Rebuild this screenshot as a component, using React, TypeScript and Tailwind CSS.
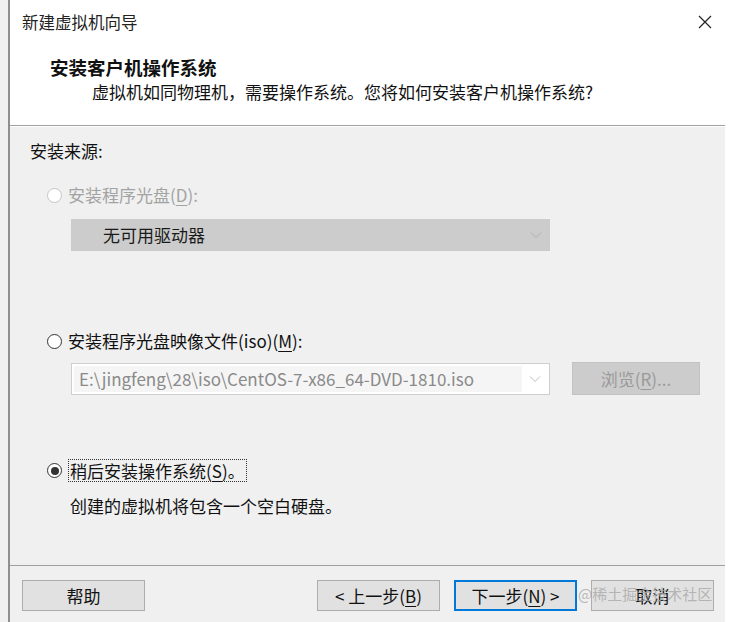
import React from 'react'

const font = "font-['Noto_Sans_CJK_SC','Noto_Sans',sans-serif]"

function Radio({ checked = false, disabled = false }: { checked?: boolean; disabled?: boolean }) {
  return (
    <span
      className={`flex items-center justify-center w-[15px] h-[15px] rounded-full bg-white border ${
        disabled ? 'border-[#c4c4c4]' : 'border-[#333333]'
      }`}
    >
      {checked && <span className="w-[8px] h-[8px] rounded-full bg-[#333333]" />}
    </span>
  )
}

function Chevron({ color }: { color: string }) {
  return (
    <svg width="12" height="8" viewBox="0 0 12 8">
      <polyline points="1,1.5 6,6.5 11,1.5" fill="none" stroke={color} strokeWidth="1" />
    </svg>
  )
}

function Key({ k }: { k: string }) {
  return <span className="underline underline-offset-[3px] decoration-1">{k}</span>
}

function Button({ children, focused = false }: { children: React.ReactNode; focused?: boolean }) {
  return (
    <div
      className={`w-[123px] h-[31px] flex items-center justify-center bg-[#e1e1e1] text-[17px] text-[#111] ${
        focused ? 'border-2 border-[#0078d7]' : 'border border-[#adadad]'
      }`}
    >
      {children}
    </div>
  )
}

export default function App() {
  return (
    <div className={`w-[734px] h-[622px] flex bg-white overflow-hidden ${font}`}>
      <div className="w-[8px] bg-[#f0f0f0]" />
      <div className="w-[2px] bg-[#8f8f8f]" />

      <div className="w-[715px] flex flex-col relative">
        {/* header */}
        <div className="h-[115px] bg-white flex flex-col">
          <div className="flex items-center justify-between pl-[12px] pr-[13px] pt-[10px] h-[34px]">
            <span className="text-[16.5px] leading-6 text-[#222]">新建虚拟机向导</span>
            <svg width="14" height="14" viewBox="0 0 14 14">
              <path d="M1 1 L13 13 M13 1 L1 13" stroke="#222" strokeWidth="1.2" />
            </svg>
          </div>
          <div className="pl-[40px] mt-[21px] text-[18.5px] leading-6 font-bold text-[#111]">安装客户机操作系统</div>
          <div className="pl-[82px] mt-[1px] text-[17px] leading-6 text-[#111]">
            虚拟机如同物理机，需要操作系统。您将如何安装客户机操作系统?
          </div>
        </div>
        <div className="h-[10px] bg-white" />
        <div className="h-[1px] bg-[#a0a0a0]" />
        <div className="h-[1px] bg-[#ffffff]" />

        {/* body */}
        <div className="flex-1 bg-[#f0f0f0] flex flex-col pl-[20px] pt-[12px] text-[17px] leading-6 text-[#111]">
          <div>安装来源:</div>

          <div className="mt-[20px] ml-[17px] flex items-center gap-[6px] text-[#a3a3a3]">
            <Radio disabled />
            <span>
              安装程序光盘(<Key k="D" />):
            </span>
          </div>
          <div className="mt-[12px] ml-[41px] w-[479px] h-[32px] bg-[#cccccc] flex items-center justify-between pl-[32px] pr-[8px]">
            <span className="text-[#1a1a1a]">无可用驱动器</span>
            <Chevron color="#b0b0b0" />
          </div>

          <div className="mt-[78px] ml-[17px] flex items-center gap-[6px]">
            <Radio />
            <span>
              安装程序光盘映像文件(iso)(<Key k="M" />):
            </span>
          </div>
          <div className="mt-[9px] ml-[41px] flex items-center gap-[22px]">
            <div className="w-[479px] h-[32px] bg-white border border-[#cfcfcf] flex items-center pl-[2px] pr-[8px]">
              <div className="w-[448px] h-[26px] bg-[#f5f5f5] flex items-center pl-[5px] text-[#8a8a8a] text-[17px] whitespace-nowrap overflow-hidden">
                E:\jingfeng\28\iso\CentOS-7-x86_64-DVD-1810.iso
              </div>
              <div className="flex-1 flex justify-end">
                <Chevron color="#bdbdbd" />
              </div>
            </div>
            <div className="w-[128px] h-[33px] bg-[#cccccc] border border-[#c2c2c2] flex items-center justify-center text-[#9a9a9a]">
              浏览(<Key k="R" />)...
            </div>
          </div>

          <div className="mt-[64px] ml-[17px] flex items-center gap-[6px]">
            <Radio checked />
            <span className="border border-dotted border-[#333] px-[1px] leading-[21px]">
              稍后安装操作系统(<Key k="S" />)。
            </span>
          </div>
          <div className="mt-[12px] ml-[40px]">创建的虚拟机将包含一个空白硬盘。</div>
        </div>

        {/* footer */}
        <div className="h-[1px] bg-[#a0a0a0]" />
        <div className="h-[56px] bg-[#f0f0f0] flex items-start justify-between pt-[14px] pl-[12px] pr-[11px]">
          <Button>帮助</Button>
          <div className="flex gap-[14px]">
            <Button>
              &lt; 上一步(<Key k="B" />)
            </Button>
            <Button focused>
              下一步(<Key k="N" />) &gt;
            </Button>
            <Button>取消</Button>
          </div>
        </div>

        {/* watermark lying over the cancel button */}
        <div className="absolute left-[568px] top-[584px] text-[15px] leading-5 text-[#a8a8a8]/80 whitespace-nowrap">
          @稀土掘金技术社区
        </div>
      </div>

      <div className="flex-1 bg-white" />
    </div>
  )
}
